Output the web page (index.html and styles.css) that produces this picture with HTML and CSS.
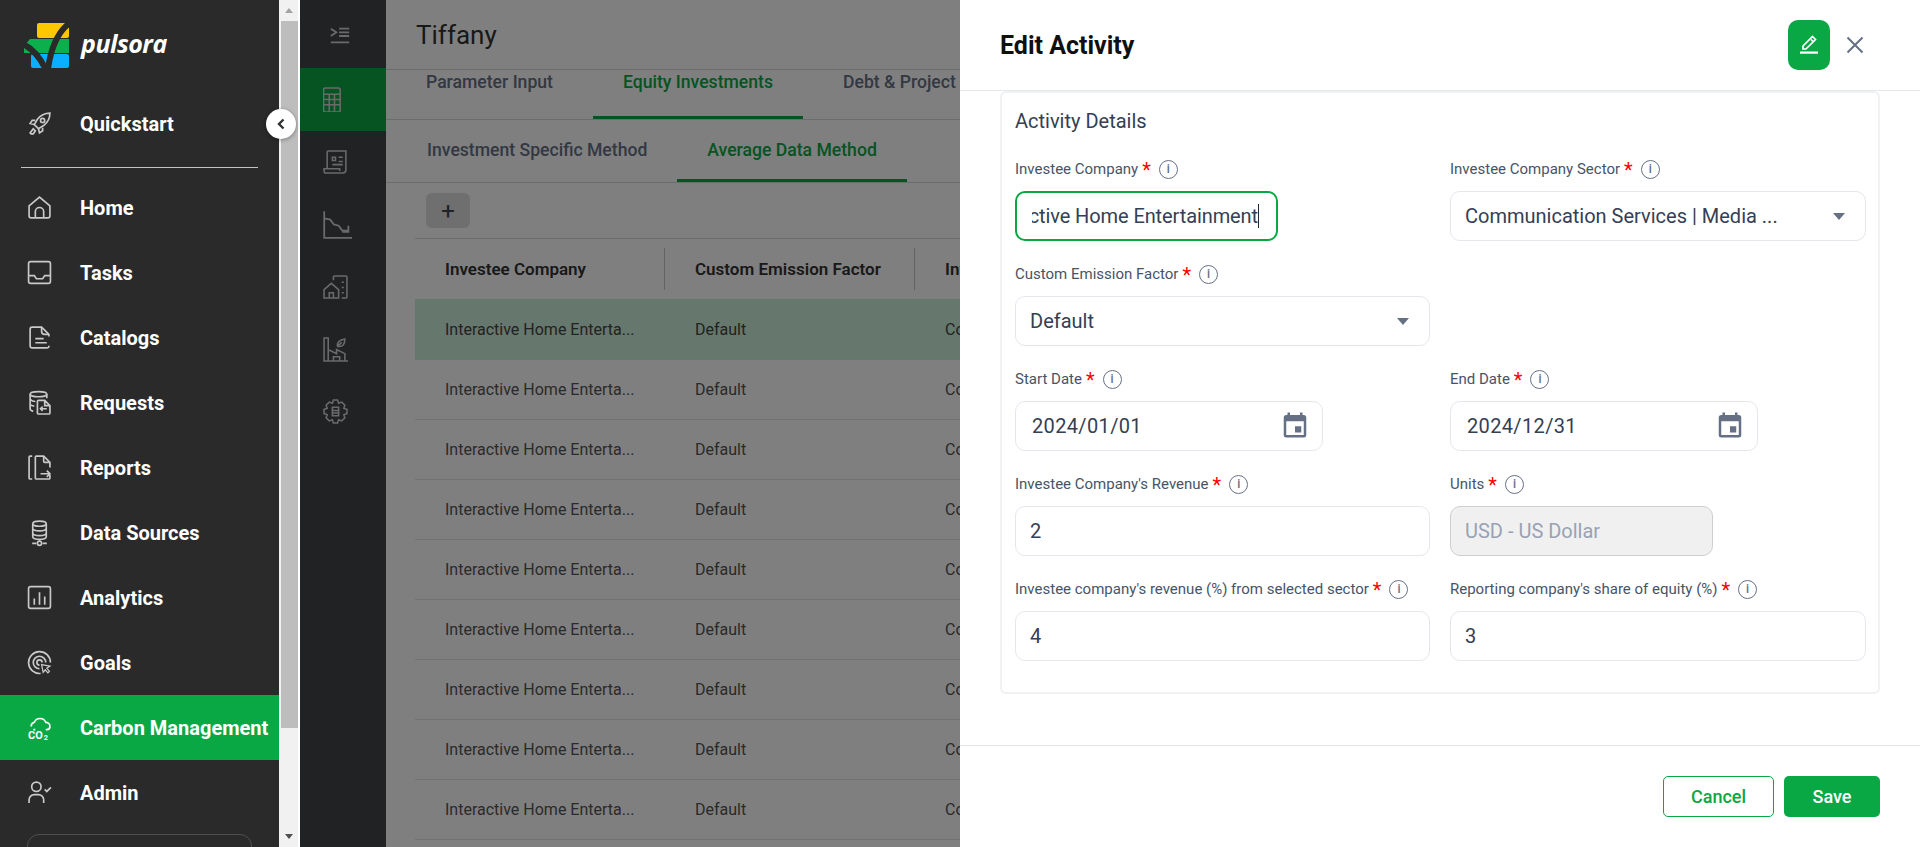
FILE: index.html
```html
<!DOCTYPE html>
<html lang="en">
<head>
  <meta charset="UTF-8" />
  <title>Pulsora - Edit Activity</title>
  <link rel="stylesheet" href="styles.css">
</head>
<body>
  <div class="app">
    <aside class="sidebar">
      <div class="logo">
        <svg width="46" height="45" viewBox="0 0 46 45">
          <rect x="13" y="0" width="32" height="15" rx="2" fill="#ffc700"/>
          <path d="M6 16h39v14H0v-7z" fill="#0bb04c"/>
          <rect x="7" y="31" width="38" height="14" rx="2" fill="#0aafff"/>
          <path d="M47 -1C34 8 27 24 24 46" fill="none" stroke="#2a2a2a" stroke-width="6"/>
          <path d="M-3 20C8 25 16 34 22 47" fill="none" stroke="#2a2a2a" stroke-width="6"/>
        </svg>
        <span class="logo-text">pulsora</span>
      </div>
      <a class="nav-item quick">
        <svg class="nav-icon" viewBox="0 0 24 24" fill="none" stroke="#6fb75e" stroke-width="1.4"><path d="M22 2c-5 0-9 2-12 6l-3 5 4 4 5-3c4-3 6-7 6-12z"/><circle cx="15" cy="9" r="2"/><path d="M8 9H5l-2 3 4 1M15 16v3l-3 2-1-4M6 17l-3 4 1 1h2l2-3z"/></svg>
        <span>Quickstart</span>
      </a>
      <div class="nav-rule"></div>
      <a class="nav-item">
        <svg class="nav-icon" viewBox="0 0 24 24"><path d="M2 10.500 12 2l10 8.500V20a2 2 0 0 1-2 2H4a2 2 0 0 1-2-2z"/><path d="M8 22v-6a4 4 0 0 1 8 0v6"/></svg>
        <span>Home</span>
      </a>
      <a class="nav-item">
        <svg class="nav-icon" viewBox="0 0 24 24"><rect x="1.500" y="1.500" width="21" height="21" rx="2"/><path d="M2 15h5l2 3h6l2-3h5"/></svg>
        <span>Tasks</span>
      </a>
      <a class="nav-item">
        <svg class="nav-icon" viewBox="0 0 24 24"><path d="M21 20v1a2 2 0 0 1-2 1H5a2 2 0 0 1-2-2V4a2 2 0 0 1 2-2h9l7 7v2"/><path d="M14 2v4a3 3 0 0 0 3 3h4M8 13h8M8 17h11"/></svg>
        <span>Catalogs</span>
      </a>
      <a class="nav-item">
        <svg class="nav-icon" viewBox="0 0 24 24" stroke-width="1.300"><ellipse cx="11" cy="4" rx="8" ry="2.500"/><path d="M3 4v14c0 1 1 2 3 2.500M19 4v4M3 9c1 1 3 2 5 2M3 14c1 1 3 1 4 1.500"/><path d="M10 11a1 1 0 0 1 1-1h6l5 5v7a1 1 0 0 1-1 1H11a1 1 0 0 1-1-1zM17 10v5h5M19 18h-6M15 16l-2 2 2 2"/></svg>
        <span>Requests</span>
      </a>
      <a class="nav-item">
        <svg class="nav-icon" viewBox="0 0 24 24" stroke-width="1.300"><path d="M5 1H3a1 1 0 0 0-1 1v20a1 1 0 0 0 1 1h2"/><path d="M22 19v3a1 1 0 0 1-1 1H9a1 1 0 0 1-1-1V2a1 1 0 0 1 1-1h7l6 6v5"/><path d="M16 1v5a1 1 0 0 0 1 1h5M13 18h9M19 15l3 3-3 3"/></svg>
        <span>Reports</span>
      </a>
      <a class="nav-item">
        <svg class="nav-icon" viewBox="0 0 24 24" stroke-width="1.300"><ellipse cx="12" cy="3.500" rx="6.500" ry="2.500"/><path d="M5.500 3.500V16c0 1.500 3 2.500 6.500 2.500s6.500-1 6.500-2.500V3.500M5.500 8c0 1.500 3 2.500 6.500 2.500s6.500-1 6.500-2.500M5.500 12.500c0 1.500 3 2.500 6.500 2.500s6.500-1 6.500-2.500M12 18.500V20M5 22.500h4M15 22.500h4"/><circle cx="12" cy="22.300" r="2"/></svg>
        <span>Data Sources</span>
      </a>
      <a class="nav-item">
        <svg class="nav-icon" viewBox="0 0 24 24"><rect x="1.500" y="1.500" width="21" height="21" rx="2"/><path d="M7 13v6M12 7v12M17 11v8"/></svg>
        <span>Analytics</span>
      </a>
      <a class="nav-item">
        <svg class="nav-icon" viewBox="0 0 24 24"><path d="M13 22.500A10.500 10.500 0 1 1 22.500 12"/><path d="M12 18a6 6 0 1 1 6-6"/><path d="M12 14.500a2.500 2.500 0 1 1 2.500-2.500"/><path d="M14 14l8 1.500-3 2 2.500 3-1.500 1.500-2.500-3-2 2.500z" stroke-width="1.200"/></svg>
        <span>Goals</span>
      </a>
      <a class="nav-item active">
        <svg class="nav-icon" viewBox="0 0 24 24"><path d="M4 11a4 4 0 0 1 3-4 6 6 0 0 1 11 0 4 4 0 0 1 4 4 3 3 0 0 1-3 3h-1M8 14H6"/><text x="1" y="23.500" class="co2">CO</text><text x="16" y="24" class="co2-sub">2</text></svg>
        <span>Carbon Management</span>
      </a>
      <a class="nav-item">
        <svg class="nav-icon" viewBox="0 0 24 24" stroke-width="1.300"><circle cx="9" cy="6.500" r="4.500"/><path d="M2 22v-3a5 5 0 0 1 5-5h4a5 5 0 0 1 5 5v3M17 9l2 2 4-4"/></svg>
        <span>Admin</span>
      </a>
      <div class="side-box"></div>
    </aside>

    <div class="side-scroll">
      <div class="scroll-up"></div>
      <div class="scroll-thumb"></div>
      <div class="scroll-down"></div>
    </div>
    <button class="collapse-btn">
      <svg width="14" height="14" viewBox="0 0 14 14" fill="none" stroke="#333" stroke-width="2.400"><path d="M9.500 2.500 5 7l4.500 4.500"/></svg>
    </button>

    <div class="workspace">
      <div class="rail">
        <div class="rail-item rail-toggle">
          <svg class="rail-icon" viewBox="0 0 24 24"><path d="M2 4l6 4-6 4M11 4h11M11 8h11M11 12h11M2 19h20" stroke-width="2"/></svg>
        </div>
        <div class="rail-item rail-active">
          <svg class="rail-icon" viewBox="0 0 24 24"><rect x="0.500" y="1" width="16" height="23" rx="2"/><path d="M.5 7h16M.5 12h16M.5 17h16M6 7v17M11 7v17"/></svg>
        </div>
        <div class="rail-item">
          <svg class="rail-icon" viewBox="0 0 24 24"><path d="M4 19V3a1 1 0 0 1 1-1h17v18a3 3 0 0 1-3 3H3a2 2 0 0 1-2-2v-2h15v2"/><path d="M9 8h3v3H9zM15 8h4M15 12h4M9 15h10" /></svg>
        </div>
        <div class="rail-item">
          <svg class="rail-icon rail-icon-wide" viewBox="0 0 24 24"><path d="M1 1v22h23M1 7l5 1 3 4 4 1 3 4h5M21 13v5h-5"/></svg>
        </div>
        <div class="rail-item">
          <svg class="rail-icon" viewBox="0 0 24 24"><path d="M1 15l7-6 7 6v8H1zM6 23v-5h4v5M10 6V3a1 1 0 0 1 1-1h11a1 1 0 0 1 1 1v19a1 1 0 0 1-1 1h-4M18 8h2M18 13h2M18 18h2"/></svg>
        </div>
        <div class="rail-item">
          <svg class="rail-icon" viewBox="0 0 24 24"><path d="M1 1h4v22H1zM1 23h23M5 23V12l8 4 0-4 8 4v7M10 23v-4h6v4M14 9c-1-4 2-6 7-7 0 5-2 8-7 7zM14 9l4-4"/></svg>
        </div>
        <div class="rail-item">
          <svg class="rail-icon" viewBox="0 0 24 24"><path d="M10 1h4l1 3 3-1 3 3-1 3 3 1v4l-3 1 1 3-3 3-3-1-1 3h-4l-1-3-3 1-3-3 1-3-3-1v-4l3-1-1-3 3-3 3 1z"/><path d="M9 8h6v8H9zM9 11h6M9 13.500h6"/></svg>
        </div>
      </div>

      <main class="content">
        <div class="page-title">Tiffany</div>
        <div class="tabs tabs-main">
          <a class="tab">Parameter Input</a>
          <a class="tab tab-active">Equity Investments</a>
          <a class="tab">Debt &amp; Project Finance</a>
        </div>
        <div class="tabs tabs-sub">
          <a class="tab">Investment Specific Method</a>
          <a class="tab tab-active">Average Data Method</a>
        </div>
        <div class="toolbar"><button class="add-btn">+</button></div>
        <div class="grid">
          <div class="grid-row grid-head">
            <div class="cell cell-a">Investee Company</div>
            <div class="cell cell-b">Custom Emission Factor</div>
            <div class="cell cell-c">Investee Company Sector</div>
          </div>
          <div class="grid-row row-selected">
            <div class="cell cell-a">Interactive Home Enterta...</div><div class="cell cell-b">Default</div><div class="cell cell-c">Communication Services</div>
          </div>
          <div class="grid-row">
            <div class="cell cell-a">Interactive Home Enterta...</div><div class="cell cell-b">Default</div><div class="cell cell-c">Communication Services</div>
          </div>
          <div class="grid-row">
            <div class="cell cell-a">Interactive Home Enterta...</div><div class="cell cell-b">Default</div><div class="cell cell-c">Communication Services</div>
          </div>
          <div class="grid-row">
            <div class="cell cell-a">Interactive Home Enterta...</div><div class="cell cell-b">Default</div><div class="cell cell-c">Communication Services</div>
          </div>
          <div class="grid-row">
            <div class="cell cell-a">Interactive Home Enterta...</div><div class="cell cell-b">Default</div><div class="cell cell-c">Communication Services</div>
          </div>
          <div class="grid-row">
            <div class="cell cell-a">Interactive Home Enterta...</div><div class="cell cell-b">Default</div><div class="cell cell-c">Communication Services</div>
          </div>
          <div class="grid-row">
            <div class="cell cell-a">Interactive Home Enterta...</div><div class="cell cell-b">Default</div><div class="cell cell-c">Communication Services</div>
          </div>
          <div class="grid-row">
            <div class="cell cell-a">Interactive Home Enterta...</div><div class="cell cell-b">Default</div><div class="cell cell-c">Communication Services</div>
          </div>
          <div class="grid-row">
            <div class="cell cell-a">Interactive Home Enterta...</div><div class="cell cell-b">Default</div><div class="cell cell-c">Communication Services</div>
          </div>
        </div>
      </main>
      <div class="backdrop"></div>
    </div>

    <section class="drawer">
      <header class="drawer-head">
        <h2>Edit Activity</h2>
        <button class="edit-btn">
          <svg width="20" height="20" viewBox="0 0 20 20"><path d="M13.500 1.500l3 3-9.500 9.500H4v-3zM12 4.500l2.500 2.500" fill="none" stroke="#fff" stroke-width="1.700"/><rect x="1" y="16.500" width="18" height="2.200" fill="#fff"/></svg>
        </button>
        <button class="close-btn">
          <svg width="18" height="18" viewBox="0 0 18 18" fill="none" stroke="#667085" stroke-width="2"><path d="M1.500 1.500l15 15M16.500 1.500l-15 15"/></svg>
        </button>
      </header>

      <div class="drawer-body">
        <div class="card">
          <h3>Activity Details</h3>
          <div class="form-grid">
            <div class="field">
              <label>Investee Company <em>*</em> <i class="info">i</i></label>
              <div class="input input-short input-focus"><div class="clip"><span>Interactive Home Entertainment</span></div><b class="caret"></b></div>
            </div>
            <div class="field">
              <label>Investee Company Sector <em>*</em> <i class="info">i</i></label>
              <div class="input">Communication Services | Media ...<b class="arrow"></b></div>
            </div>
            <div class="field">
              <label>Custom Emission Factor <em>*</em> <i class="info">i</i></label>
              <div class="input">Default<b class="arrow"></b></div>
            </div>
            <div class="field"></div>
            <div class="field">
              <label>Start Date <em>*</em> <i class="info">i</i></label>
              <div class="input input-date">2024/01/01
                <svg class="cal" viewBox="0 0 24 24"><path d="M19 4h-1V2h-2v2H8V2H6v2H5a2 2 0 0 0-2 2v14a2 2 0 0 0 2 2h14a2 2 0 0 0 2-2V6a2 2 0 0 0-2-2zm0 16H5V9h14zm-7-7h5v5h-5z"/></svg>
              </div>
            </div>
            <div class="field">
              <label>End Date <em>*</em> <i class="info">i</i></label>
              <div class="input input-date">2024/12/31
                <svg class="cal" viewBox="0 0 24 24"><path d="M19 4h-1V2h-2v2H8V2H6v2H5a2 2 0 0 0-2 2v14a2 2 0 0 0 2 2h14a2 2 0 0 0 2-2V6a2 2 0 0 0-2-2zm0 16H5V9h14zm-7-7h5v5h-5z"/></svg>
              </div>
            </div>
            <div class="field">
              <label>Investee Company's Revenue <em>*</em> <i class="info">i</i></label>
              <div class="input">2</div>
            </div>
            <div class="field">
              <label>Units <em>*</em> <i class="info">i</i></label>
              <div class="input input-short input-disabled">USD - US Dollar</div>
            </div>
            <div class="field">
              <label>Investee company's revenue (%) from selected sector <em>*</em> <i class="info">i</i></label>
              <div class="input">4</div>
            </div>
            <div class="field">
              <label>Reporting company's share of equity (%) <em>*</em> <i class="info">i</i></label>
              <div class="input">3</div>
            </div>
          </div>
        </div>
      </div>

      <footer class="drawer-foot">
        <button class="btn btn-outline">Cancel</button>
        <button class="btn btn-solid">Save</button>
      </footer>
    </section>
  </div>
</body>
</html>
```

FILE: styles.css
```css
* {
  box-sizing: border-box;
}
html, body {
  margin: 0;
  padding: 0;
  height: 847px;
  overflow: hidden;
}
body {
  font-family: Roboto, "Liberation Sans", sans-serif;
  background: #fff;
}
.app {
  display: flex;
  position: relative;
  height: 847px;
  overflow: hidden;
}

/* left sidebar */
.sidebar {
  width: 279px;
  flex-shrink: 0;
  background: #2a2a2a;
  overflow: hidden;
}
.logo {
  display: flex;
  align-items: center;
  height: 90px;
  padding-left: 24px;
}
.logo-text {
  color: #fff;
  font-family: "Open Sans", sans-serif;
  font-style: italic;
  font-weight: 700;
  font-size: 25px;
  letter-spacing: -0.5px;
  margin: -4px 0 0 11px;
}
.nav-item {
  display: flex;
  align-items: center;
  height: 65px;
  padding-left: 27px;
  color: #fff;
  font-size: 20px;
  font-weight: 700;
}
.nav-item.quick {
  margin-top: 1px;
}
.nav-item span {
  margin-left: 28px;
}
.nav-item.active {
  background: #0aa845;
}
.nav-icon {
  width: 25px;
  height: 25px;
  fill: none;
  stroke: #c9c9c9;
  stroke-width: 1.600;
  flex-shrink: 0;
  overflow: visible;
}
.active .nav-icon {
  stroke: #fff;
}
.co2, .co2-sub {
  fill: #fff;
  stroke: none;
  font-weight: 700;
}
.co2 {
  font-size: 10.500px;
}
.co2-sub {
  font-size: 7px;
}
.nav-rule {
  height: 1px;
  background: #bfc4bf;
  margin: 11px 21px 7px;
}
.side-box {
  height: 60px;
  margin: 9px 27px 0;
  border: 1px solid #4d514e;
  border-radius: 12px;
}

/* the scrollbar of the sidebar */
.side-scroll {
  width: 21px;
  flex-shrink: 0;
  background: #f1f1f1;
  border-right: 2px solid #fff;
  padding-left: 2px;
  display: flex;
  flex-direction: column;
  align-items: stretch;
}
.scroll-up, .scroll-down {
  height: 21px;
  position: relative;
}
.scroll-up::after, .scroll-down::after {
  content: "";
  position: absolute;
  left: 4px;
  top: 8px;
  border-left: 4.500px solid transparent;
  border-right: 4.500px solid transparent;
}
.scroll-up::after {
  border-bottom: 5px solid #a3a3a3;
}
.scroll-down::after {
  border-top: 5px solid #505050;
}
.scroll-thumb {
  height: 707px;
  background: #bdbdbd;
}
.scroll-down {
  margin-top: auto;
}
.collapse-btn {
  position: absolute;
  left: 266px;
  top: 109px;
  width: 30px;
  height: 30px;
  border: none;
  padding: 0;
  border-radius: 50%;
  background: #fff;
  box-shadow: 0 1px 4px rgba(0,0,0,.35);
  display: flex;
  align-items: center;
  justify-content: center;
  z-index: 5;
}

/* rail + page behind the drawer */
.workspace {
  width: 660px;
  flex-shrink: 0;
  display: flex;
  position: relative;
}
.rail {
  width: 86px;
  flex-shrink: 0;
  background: #434548;
}
.rail-item {
  height: 62.500px;
  display: flex;
  align-items: center;
  padding-left: 23px;
}
.rail-toggle {
  height: 68px;
  padding: 4px 0 0 29px;
}
.rail-active {
  background: #0aa845;
}
.rail-icon {
  width: 25px;
  height: 25px;
  fill: none;
  stroke: #d4d4d4;
  stroke-width: 1.500;
}
.rail-toggle .rail-icon {
  width: 22px;
  height: 22px;
}
.rail-icon-wide {
  width: 29px;
  height: 29px;
}
.content {
  flex: 1;
  background: #fff;
  min-width: 0;
  overflow: hidden;
}
.page-title {
  height: 70px;
  padding: 19px 0 0 30px;
  font-size: 26px;
  line-height: 32px;
  color: #333;
  border-bottom: 1px solid #d8d8d8;
}
.tabs {
  display: flex;
  border-bottom: 1px solid #d8d8d8;
  white-space: nowrap;
}
.tabs-main {
  height: 50px;
  gap: 10px;
  padding-left: 10px;
}
.tabs-sub {
  height: 63px;
  padding-left: 11px;
}
.tab {
  padding: 0 30px;
  font-size: 17.600px;
  font-weight: 500;
  color: #667085;
}
.tabs-main .tab {
  padding-top: 3px;
  line-height: 19px;
}
.tabs-sub .tab {
  line-height: 61px;
}
.tab-active {
  color: #0aa845;
  border-bottom: 3px solid #0aa845;
}
.toolbar {
  height: 55px;
  padding: 10px 0 0 40px;
}
.add-btn {
  width: 44px;
  height: 35px;
  border: none;
  border-radius: 6px;
  background: #dedede;
  color: #444;
  font-family: Roboto, sans-serif;
  font-size: 24px;
  line-height: 30px;
  padding: 0;
}
.grid {
  margin-left: 29px;
  border-top: 1px solid #d8d8d8;
}
.grid-row {
  display: flex;
  align-items: center;
  height: 60px;
  border-bottom: 1px solid #e4e4e4;
  white-space: nowrap;
  font-size: 16px;
  color: #555;
}
.grid-head {
  border-bottom: none;
  font-weight: 600;
  font-size: 17px;
  color: #333;
}
.row-selected {
  height: 61px;
  background: #cdeeda;
  color: #444;
  border-bottom: none;
}
.cell {
  width: 250px;
  padding-left: 30px;
  flex-shrink: 0;
}
.cell-c {
  width: 45px;
  overflow: hidden;
}
.grid-head .cell-a, .grid-head .cell-b {
  border-right: 1px solid #c6c6c6;
  height: 42px;
  line-height: 42px;
}
.backdrop {
  position: absolute;
  inset: 0;
  background: rgba(0,0,0,.5);
}

/* edit drawer */
.drawer {
  width: 960px;
  flex-shrink: 0;
  height: 847px;
  background: #fff;
  display: flex;
  flex-direction: column;
}
.drawer-head {
  display: flex;
  align-items: center;
  height: 91px;
  flex-shrink: 0;
  padding: 0 56px 0 40px;
  border-bottom: 1px solid #e5e7eb;
}
.drawer-head h2 {
  margin: 0;
  flex: 1;
  font-size: 25px;
  font-weight: 700;
  color: #101010;
}
.edit-btn {
  width: 42px;
  height: 50px;
  border: none;
  border-radius: 10px;
  background: #0aa845;
  display: flex;
  align-items: center;
  justify-content: center;
  padding: 0;
}
.close-btn {
  border: none;
  background: none;
  padding: 0;
  margin-left: 16px;
  width: 18px;
  height: 18px;
}
.drawer-body {
  flex: 1;
  padding: 0 40px;
}
.card {
  height: 603px;
  border: 2px solid #f0f1f3;
  border-radius: 6px;
  padding: 0 12px 0 13px;
}
.card h3 {
  margin: 0;
  padding-top: 16px;
  font-size: 20px;
  font-weight: 400;
  line-height: 24px;
  color: #344054;
  height: 64px;
}
.form-grid {
  display: grid;
  grid-template-columns: 415px 416px;
  column-gap: 20px;
  row-gap: 21px;
}
.field {
  height: 84px;
}
.field label {
  display: flex;
  align-items: center;
  height: 24px;
  margin-bottom: 10px;
  font-size: 15px;
  color: #475467;
  white-space: nowrap;
}
.field em {
  color: #f00;
  font-style: normal;
  font-size: 20px;
  line-height: 20px;
  margin: 1px 0 0 4px;
}
.info {
  display: inline-flex;
  align-items: center;
  justify-content: center;
  flex-shrink: 0;
  width: 19px;
  height: 19px;
  margin-left: 8px;
  border: 1.500px solid #667085;
  border-radius: 50%;
  color: #667085;
  font-size: 12px;
  font-style: normal;
  font-weight: 500;
}
.input {
  display: flex;
  align-items: center;
  position: relative;
  height: 50px;
  padding: 0 14px;
  border: 1px solid #e4e7ec;
  border-radius: 10px;
  font-size: 20px;
  color: #344054;
  white-space: nowrap;
}
.input-short {
  width: 263px;
}
.input-date {
  width: 308px;
  justify-content: space-between;
  padding: 0 12px 0 16px;
  letter-spacing: .35px;
}
.input-focus {
  border: 2px solid #0aa845;
  padding: 0 18px 0 15px;
  letter-spacing: -.1px;
}
.input-disabled {
  background: #f0f0f0;
  border-color: #cfcfcf;
  color: #98a2b3;
}
.clip {
  display: flex;
  justify-content: flex-end;
  width: 100%;
  overflow: hidden;
}
.clip span {
  flex-shrink: 0;
}
.caret {
  position: absolute;
  left: 241px;
  top: 11px;
  width: 1px;
  height: 24px;
  background: #1d2939;
}
.arrow {
  position: absolute;
  right: 20px;
  top: 21px;
  border-left: 6.500px solid transparent;
  border-right: 6.500px solid transparent;
  border-top: 7px solid #667085;
}
.cal {
  width: 30px;
  height: 30px;
  margin-top: -3px;
  fill: #667085;
}
.drawer-foot {
  display: flex;
  justify-content: flex-end;
  gap: 10px;
  height: 102px;
  flex-shrink: 0;
  padding: 30px 40px 0 0;
  border-top: 1px solid #e5e7eb;
}
.btn {
  height: 41px;
  border-radius: 5px;
  font-family: Roboto, sans-serif;
  font-size: 18px;
  font-weight: 500;
}
.btn-outline {
  width: 111px;
  background: #fff;
  color: #0aa845;
  border: 1px solid #0aa845;
}
.btn-solid {
  width: 96px;
  background: #0aa845;
  color: #fff;
  border: none;
}
```
